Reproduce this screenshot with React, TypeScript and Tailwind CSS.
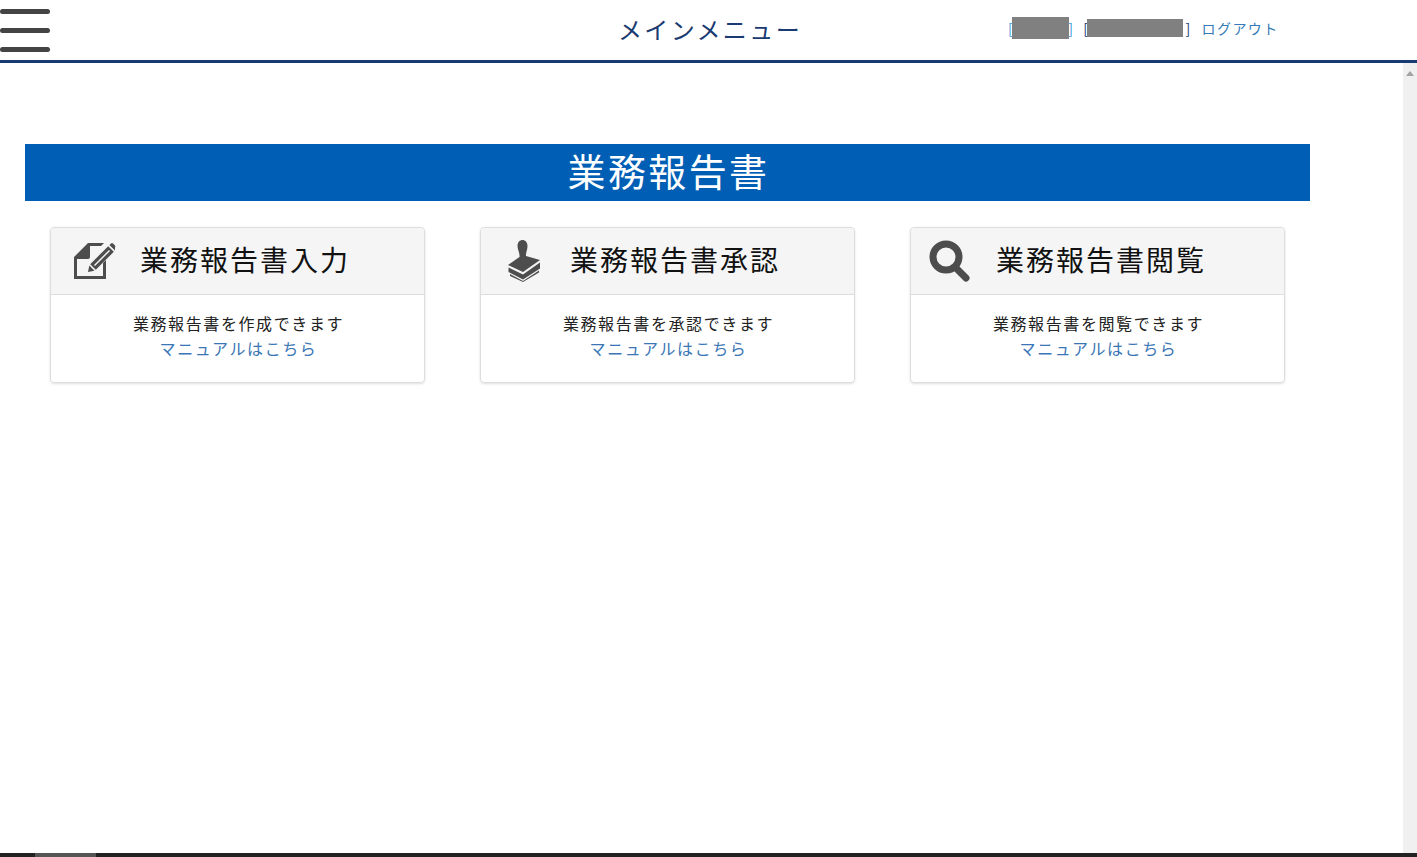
import React from 'react';

const font = "font-['Noto_Sans_CJK_JP','Noto_Sans_CJK_SC',sans-serif]";

const EditIcon = () => (
  <svg width="42" height="38" viewBox="0 0 42 38" className="ml-[23px] mr-[24px] shrink-0" fill="#4d4d4d">
    <path d="M0 15 L14 1 H30 L27 4 H16 V15 Q16 17 14 17 H3 V34 H29 V21 L32 18 V37 H0 Z" />
    <path d="M16.2 22.2 L34.2 4.2 L39.8 9.8 L21.8 27.8 Z" />
    <path d="M15.3 23.5 L20.5 28.7 L14 30 Z" />
    <path d="M35.4 3 L37 1.4 Q38 0.6 39 1.4 L41 3.4 Q41.8 4.4 41 5.4 L41 8.6 Z" />
    <path d="M20.5 23.5 L35.5 8.5" stroke="#f5f5f5" strokeWidth="1.4" />
  </svg>
);

const StampIcon = () => (
  <svg width="36" height="42" viewBox="0 0 36 42" className="ml-[26px] mr-[27px] shrink-0" fill="#4d4d4d">
    <path d="M11 18 L12.5 17 C13 13 10.5 10 10.5 6 C10.5 2 13 0 15.5 0 C18 0 20.5 2 20.5 6 C20.5 10 18.5 13 19 16 L33 20 L16 32 L1 25 Z" />
    <path d="M1.5 27.5 L16 34.5 L33 22.5 V28.5 L16 39.5 L1.5 32 Z" />
    <path d="M3 34 L16 41 L32 30.5 V32.5 L16 42 L3 36 Z" />
  </svg>
);

const SearchIcon = () => (
  <svg width="42" height="42" viewBox="0 0 42 42" className="ml-[18px] mr-[25px] shrink-0" fill="none" stroke="#4d4d4d">
    <circle cx="17" cy="17" r="13" strokeWidth="7" />
    <path d="M27 28 L37 38" strokeWidth="7" strokeLinecap="round" />
  </svg>
);

const cards = [
  { title: '業務報告書入力', text: '業務報告書を作成できます', icon: <EditIcon /> },
  { title: '業務報告書承認', text: '業務報告書を承認できます', icon: <StampIcon /> },
  { title: '業務報告書閲覧', text: '業務報告書を閲覧できます', icon: <SearchIcon /> },
];

const App: React.FC = () => {
  return (
    <div className={`flex h-[857px] w-[1417px] flex-col overflow-hidden bg-white ${font}`}>
      <header className="grid h-[63px] shrink-0 grid-cols-[1fr_auto_1fr] items-center border-b-[3px] border-[#1a3a72]">
        <div className="flex w-[50px] flex-col gap-[14px]">
          <span className="h-[5px] rounded-full bg-[#444]" />
          <span className="h-[5px] rounded-full bg-[#444]" />
          <span className="h-[5px] rounded-full bg-[#444]" />
        </div>
        <h1 className="pb-[2px] pl-[3px] text-2xl font-normal tracking-[0.1em] text-[#1a3a72]">メインメニュー</h1>
        <div className="flex items-center pb-[4px] pl-[206px] text-sm tracking-[0.1em] text-[#1a3a72]">
          <span className="text-[#3a9ad9]">[</span>
          <span className="ml-[-2px] h-[22px] w-[57px] bg-[#808080]" />
          <span className="ml-[-1px] text-[#3a9ad9]">]</span>
          <span className="ml-[9px]">[</span>
          <span className="ml-[-2px] h-[18px] w-[96px] bg-[#808080]" />
          <span className="ml-[2px]">]</span>
          <a className="ml-[10px] text-[#337ab7]">ログアウト</a>
        </div>
      </header>

      <div className="flex min-h-0 flex-1">
        <main className="min-w-0 flex-1 pl-[25px] pt-[81px]">
          <div className="flex h-[57px] w-[1285px] items-center justify-center bg-[#005eb4] pb-[7px] pl-[2px] text-[38px] tracking-[2.4px] text-white">
            業務報告書
          </div>
          <div className="mt-[26px] flex w-[1285px] justify-between px-[25px]">
            {cards.map(card => (
              <div key={card.title} className="h-[156px] w-[375px] rounded border border-[#ddd] shadow-sm">
                <div className="flex h-[67px] items-center rounded-t border-b border-[#ddd] bg-[#f5f5f5] text-[28px] tracking-[2px] text-[#111]">
                  {card.icon}
                  <span className="pb-[4px]">{card.title}</span>
                </div>
                <div className="pl-[2px] pt-[16px] text-center text-base leading-[25px] tracking-[0.1em] text-[#222]">
                  <p>{card.text}</p>
                  <a className="text-[#3a76b5]">マニュアルはこちら</a>
                </div>
              </div>
            ))}
          </div>
        </main>
        <div className="w-[14px] shrink-0 bg-[#f0f0f0] pl-[3px] pt-[8px]">
          <div className="h-0 w-0 border-x-[4px] border-b-[5px] border-x-transparent border-b-[#a3a3a3]" />
        </div>
      </div>

      <div className="h-[4px] shrink-0 bg-[#222] pl-[35px]">
        <div className="h-full w-[61px] bg-[#555]" />
      </div>
    </div>
  );
};

export default App;
